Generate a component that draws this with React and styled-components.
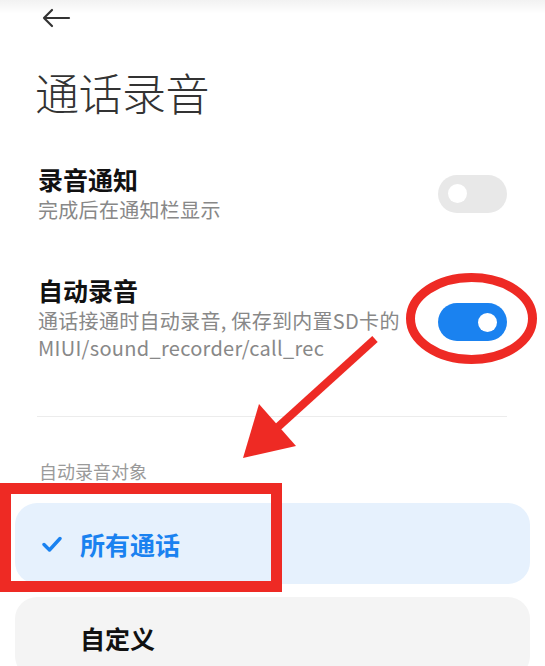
import styled, { createGlobalStyle } from "styled-components"

const Global = createGlobalStyle`
    html, body {
        margin: 0;
        padding: 0;
        background: #ffffff;
    }
    body {
        font-family: "Noto Sans CJK SC", "Noto Sans", sans-serif;
        color: #1a1a1a;
    }
`

const Page = styled.div`
    position: relative;
    width: 545px;
    height: 666px;
    overflow: hidden;
    background: #fff;
    &::before {
        content: "";
        position: absolute;
        left: 0;
        top: 0;
        width: 100%;
        height: 14px;
        background: linear-gradient(to bottom, rgba(0,0,0,0.05), rgba(0,0,0,0));
    }
`

const Header = styled.div`
    height: 36px;
    padding-left: 41px;
    display: flex;
    align-items: center;
`

const Title = styled.h1`
    margin: 30px 0 0 35px;
    font-size: 44px;
    font-weight: 300;
    line-height: 52px;
    color: #333;
    letter-spacing: -0.5px;
`

const Row = styled.div`
    display: flex;
    align-items: center;
    justify-content: space-between;
    padding: 0 38px 0 38px;
    margin-top: ${p => p.$top}px;
`

const Texts = styled.div`
    display: flex;
    flex-direction: column;
`

const RowTitle = styled.div`
    font-size: 25px;
    font-weight: 700;
    line-height: 30px;
    color: #111;
`

const RowSub = styled.div`
    font-size: 20px;
    line-height: 27px;
    letter-spacing: 0.3px;
    color: #888;
    margin-top: 2px;
`

const Toggle = styled.div`
    width: 69px;
    height: 38px;
    border-radius: 19px;
    margin-top: ${p => p.$shift || 0}px;
    background: ${p => (p.$on ? "#1a82f0" : "#e8e8e8")};
    display: flex;
    align-items: center;
    justify-content: ${p => (p.$on ? "flex-end" : "flex-start")};
    padding: 0 10px;
    box-sizing: border-box;
    flex-shrink: 0;
    &::after {
        content: "";
        width: 19px;
        height: 19px;
        border-radius: 50%;
        background: #fff;
    }
`

const Divider = styled.div`
    height: 1px;
    background: #ececec;
    margin: 55px 38px 0 37px;
`

const SectionLabel = styled.div`
    margin: 42px 0 0 39px;
    font-size: 18px;
    line-height: 24px;
    color: #9a9a9a;
`

const Options = styled.div`
    display: flex;
    flex-direction: column;
    gap: 13px;
    margin: 20px 15px 0 15px;
`

const Option = styled.div`
    height: 81px;
    flex-shrink: 0;
    border-radius: 22px;
    background: ${p => (p.$active ? "#e6f1fd" : "#f4f4f4")};
    display: flex;
    align-items: center;
    padding-left: 27px;
    gap: 18px;
    font-size: 25px;
    font-weight: 700;
    color: ${p => (p.$active ? "#1a82f0" : "#111")};
`

const CheckSlot = styled.div`
    width: 20px;
    display: flex;
    align-items: center;
`

const Overlay = styled.svg`
    position: absolute;
    left: 0;
    top: 0;
    pointer-events: none;
`

export default function App() {
    return (
        <Page>
            <Global />
            <Header>
                <svg width="30" height="20" viewBox="0 0 30 20">
                    <path d="M28 10H3M11 2L3 10l8 8" fill="none" stroke="#333" strokeWidth="2.2" strokeLinecap="round" strokeLinejoin="round" />
                </svg>
            </Header>
            <Title>通话录音</Title>

            <Row $top={46}>
                <Texts>
                    <RowTitle>录音通知</RowTitle>
                    <RowSub>完成后在通知栏显示</RowSub>
                </Texts>
                <Toggle />
            </Row>

            <Row $top={52}>
                <Texts>
                    <RowTitle>自动录音</RowTitle>
                    <RowSub>
                        通话接通时自动录音, 保存到内置SD卡的<br />
                        MIUI/sound_recorder/call_rec
                    </RowSub>
                </Texts>
                <Toggle $on $shift={8} />
            </Row>

            <Divider />
            <SectionLabel>自动录音对象</SectionLabel>

            <Options>
                <Option $active>
                    <CheckSlot>
                        <svg width="20" height="18" viewBox="0 0 20 18">
                            <path d="M2 9.5l5.5 5.5L18 3.5" fill="none" stroke="#1a82f0" strokeWidth="3.4" strokeLinecap="round" strokeLinejoin="round" />
                        </svg>
                    </CheckSlot>
                    所有通话
                </Option>
                <Option>
                    <CheckSlot />
                    自定义
                </Option>
            </Options>

            <Overlay width="545" height="666" viewBox="0 0 545 666">
                <ellipse cx="471.5" cy="318.5" rx="61" ry="41" fill="none" stroke="#ee2a24" strokeWidth="9" />
                <line x1="375" y1="339" x2="268" y2="436" stroke="#ee2a24" strokeWidth="8" />
                <polygon points="243,458 259,404 296,446" fill="#ee2a24" />
                <rect x="5.5" y="488.5" width="271" height="98" fill="none" stroke="#ee2a24" strokeWidth="11" />
            </Overlay>
        </Page>
    )
}
